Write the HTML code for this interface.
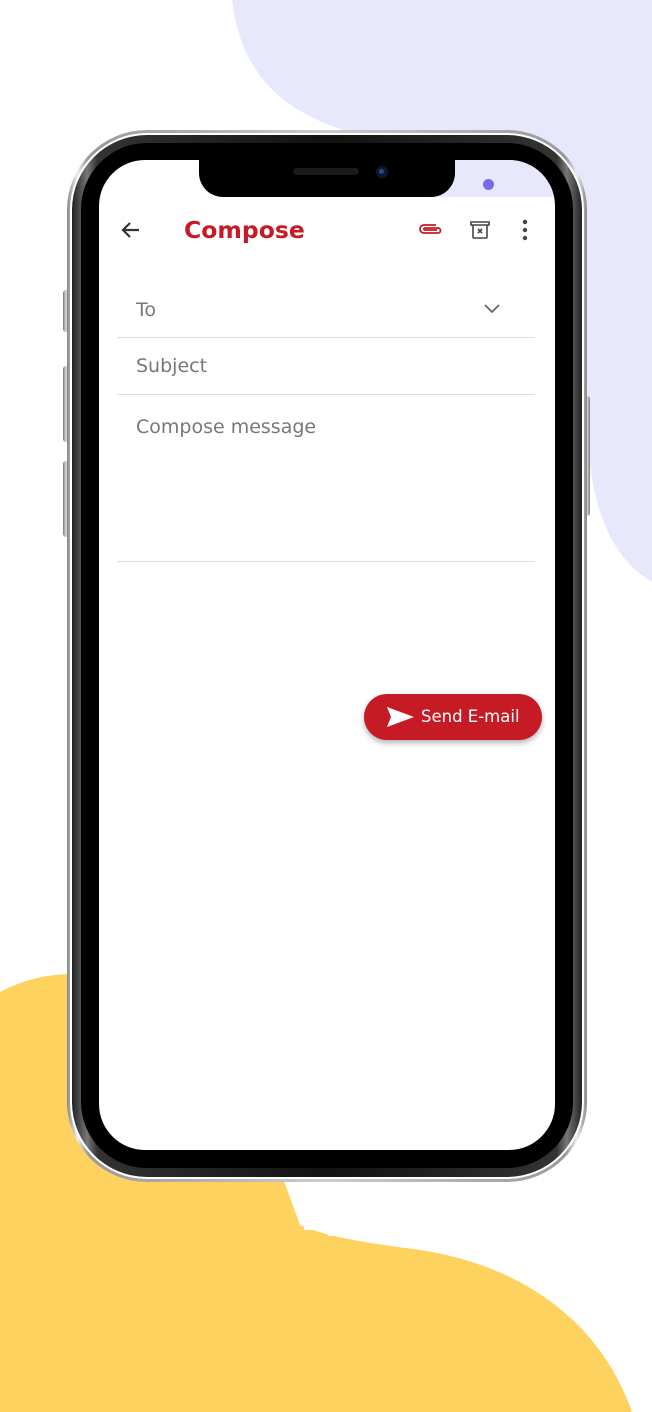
<!DOCTYPE html>
<html><head><meta charset="utf-8"><style>
*{margin:0;padding:0;box-sizing:border-box}
body{width:652px;height:1412px;position:relative;overflow:hidden;background:#fff;font-family:"DejaVu Sans","Liberation Sans",sans-serif}
.abs{position:absolute}
</style></head><body>
<svg class="abs" style="left:0;top:0" width="652" height="1412">
<path d="M232 0 C245 110 330 135 440 150 C555 168 590 290 587 400 C585 490 605 555 652 582 L652 0 Z" fill="#e8e8fc"/>
<path d="M0 992 C30 976 60 972 90 975 L280 1170 L300 1225 C330 1238 370 1243 420 1250 C520 1265 600 1320 632 1412 L0 1412 Z" fill="#fdd25f"/>
<rect x="304" y="1180" width="12" height="50" fill="#fff"/>
<rect x="328" y="1180" width="11" height="56" fill="#fff"/>
</svg>
<div class="abs" style="left:63px;top:290px;width:6px;height:42px;background:linear-gradient(90deg,#777,#ddd,#777);border-radius:3px"></div>
<div class="abs" style="left:63px;top:366px;width:6px;height:76px;background:linear-gradient(90deg,#777,#ddd,#777);border-radius:3px"></div>
<div class="abs" style="left:63px;top:461px;width:6px;height:76px;background:linear-gradient(90deg,#777,#ddd,#777);border-radius:3px"></div>
<div class="abs" style="left:584px;top:396px;width:6px;height:120px;background:linear-gradient(90deg,#777,#ddd,#777);border-radius:3px"></div>
<div class="abs" style="left:67px;top:130px;width:520px;height:1052px;border-radius:80px;background:linear-gradient(90deg,#888,#eee 2%,#999 4%,#ccc 50%,#999 96%,#eee 98%,#888)">
 <div class="abs" style="left:3px;top:3px;right:3px;bottom:3px;border-radius:77px;background:#fff"></div>
 <div class="abs" style="left:5px;top:5px;right:5px;bottom:5px;border-radius:75px;background:linear-gradient(90deg,#222,#777 3%,#333 5%,#111 50%,#333 95%,#777 97%,#222)"></div>
 <div class="abs" style="left:14px;top:13px;right:14px;bottom:14px;border-radius:66px;background:#000"></div>
 <div class="abs" style="left:32px;top:30px;width:456px;height:990px;border-radius:46px;background:#fff;overflow:hidden">
  <div class="abs" style="left:228px;top:0;width:228px;height:37px;background:#e8e8fc"></div>
  <div class="abs" style="left:384px;top:19px;width:11px;height:11px;border-radius:50%;background:#7b68ee"></div>
  <div class="abs" style="left:100px;top:0;width:256px;height:37px;background:#000;border-radius:0 0 24px 24px"></div>
  <div class="abs" style="left:194px;top:8px;width:66px;height:7px;border-radius:4px;background:#1a1a1a"></div>
  <div class="abs" style="left:277px;top:6px;width:12px;height:12px;border-radius:50%;background:#0c1a2a"><div style="margin:3px 0 0 3px;width:5px;height:5px;border-radius:50%;background:#1e4d8a"></div></div>
  <svg class="abs" style="left:20px;top:58px" width="24" height="24" viewBox="0 0 24 24"><path d="M20 12H5M11 5l-7 7 7 7" fill="none" stroke="#333" stroke-width="2.2"/></svg>
  <div class="abs" style="left:85px;top:56px;font-size:23.5px;font-weight:bold;color:#c61a24">Compose</div>
  <svg class="abs" style="left:318px;top:61px" width="26" height="16" viewBox="0 0 26 16"><path d="M19 4H7a4 4 0 0 0 0 8h14a2.5 2.5 0 0 0 0-5H8a1 1 0 0 0 0 2h12" fill="none" stroke="#c61a24" stroke-width="1.8"/></svg>
  <svg class="abs" style="left:369px;top:58px" width="24" height="24" viewBox="0 0 24 24"><path d="M3 4h18v3H3zM5 7v12a1 1 0 0 0 1 1h12a1 1 0 0 0 1-1V7M10 11l4 4M14 11l-4 4" fill="none" stroke="#444" stroke-width="1.6"/></svg>
  <svg class="abs" style="left:421px;top:59px" width="10" height="22"><circle cx="5" cy="3" r="2.2" fill="#444"/><circle cx="5" cy="11" r="2.2" fill="#444"/><circle cx="5" cy="19" r="2.2" fill="#444"/></svg>
  <div class="abs" style="left:37px;top:139px;font-size:19px;color:#777">To</div>
  <svg class="abs" style="left:384px;top:142px" width="18" height="12"><path d="M2 3l7 7 7-7" fill="none" stroke="#666" stroke-width="1.8"/></svg>
  <div class="abs" style="left:18px;top:177px;width:418px;height:1px;background:#ddd"></div>
  <div class="abs" style="left:37px;top:195px;font-size:19px;color:#777">Subject</div>
  <div class="abs" style="left:18px;top:234px;width:418px;height:1px;background:#ddd"></div>
  <div class="abs" style="left:37px;top:256px;font-size:19px;color:#777">Compose message</div>
  <div class="abs" style="left:18px;top:401px;width:418px;height:1px;background:#ddd"></div>
  <div class="abs" style="left:265px;top:534px;width:178px;height:46px;border-radius:23px;background:#c61a24;box-shadow:0 3px 6px rgba(0,0,0,.3);color:#fff;font-size:16.5px">
   <svg class="abs" style="left:22px;top:12px" width="30" height="22" viewBox="0 0 30 22"><path d="M1 1L28 11 1 21 5 11Z" fill="#fff"/></svg>
   <div class="abs" style="left:57px;top:13px">Send E-mail</div>
  </div>
 </div>
</div>
</body></html>
